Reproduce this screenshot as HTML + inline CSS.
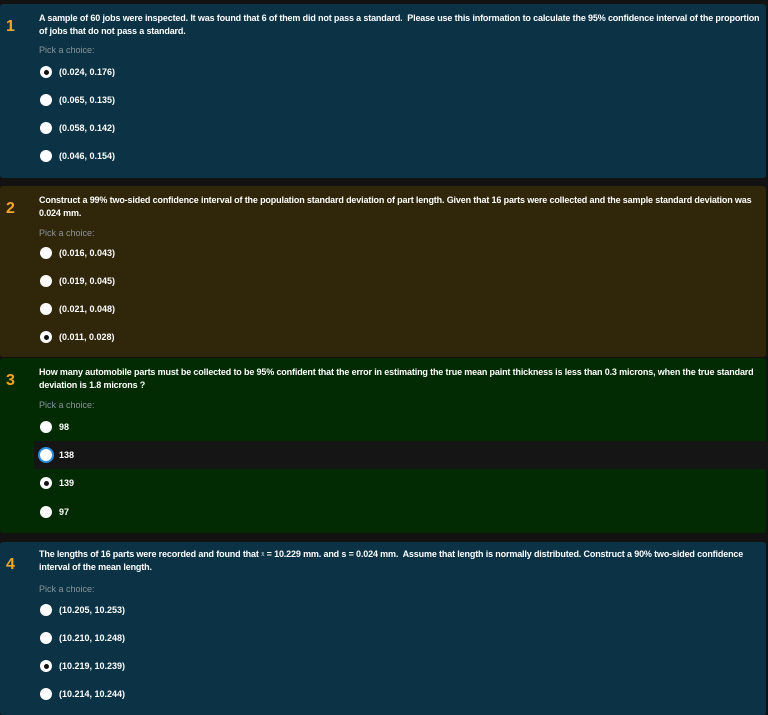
<!DOCTYPE html>
<html><head><style>
body{margin:0;width:768px;height:715px;background:#121212;position:relative;overflow:hidden;font-family:"Liberation Sans",Arial,sans-serif;}
.card{position:absolute;left:0;width:766px;border-radius:3px;}
.n{position:absolute;left:6px;color:#f5a623;font-weight:bold;font-size:16px;}
.q{position:absolute;left:39px;color:#fff;font-size:9px;font-weight:bold;white-space:nowrap;line-height:13px;letter-spacing:-0.15px;}
.q .x{display:inline-block;font-size:6px;color:#aaa;line-height:6px;vertical-align:middle;}
.p{position:absolute;left:39px;color:#8a949a;font-size:9px;}
.o{position:absolute;left:40px;height:12px;color:#fff;font-size:9px;font-weight:bold;white-space:nowrap;}
.o i{position:absolute;left:0;top:0;width:12px;height:12px;border-radius:50%;background:#fff;}
.o i.s::after{content:"";position:absolute;left:3.5px;top:3.5px;width:5px;height:5px;border-radius:50%;background:#111;}
.o i.f{box-shadow:0 0 0 2px #2a8ee0;}
.o span{position:absolute;left:19px;top:0;line-height:12px;}
</style></head><body>
<div class="card" style="top:4px;height:174px;background:#0b3245"></div>
<div class="card" style="top:186px;height:171px;background:#30260a"></div>
<div class="card" style="top:358px;height:175px;background:#032b03"></div>
<div style="position:absolute;left:34px;top:441px;width:734px;height:28px;background:#151515"></div>
<div class="card" style="top:542px;height:173px;background:#0b3245"></div>

<div class="n" style="top:18px">1</div>
<div class="q" style="top:12px">A sample of 60 jobs were inspected. It was found that 6 of them did not pass a standard.&nbsp; Please use this information to calculate the 95% confidence interval of the proportion<br>of jobs that do not pass a standard.</div>
<div class="p" style="top:45px">Pick a choice:</div>
<div class="o" style="top:66px"><i class="s"></i><span>(0.024, 0.176)</span></div>
<div class="o" style="top:94px"><i></i><span>(0.065, 0.135)</span></div>
<div class="o" style="top:122px"><i></i><span>(0.058, 0.142)</span></div>
<div class="o" style="top:150px"><i></i><span>(0.046, 0.154)</span></div>

<div class="n" style="top:200px">2</div>
<div class="q" style="top:194px">Construct a 99% two-sided confidence interval of the population standard deviation of part length. Given that 16 parts were collected and the sample standard deviation was<br>0.024 mm.</div>
<div class="p" style="top:228px">Pick a choice:</div>
<div class="o" style="top:247px"><i></i><span>(0.016, 0.043)</span></div>
<div class="o" style="top:275px"><i></i><span>(0.019, 0.045)</span></div>
<div class="o" style="top:303px"><i></i><span>(0.021, 0.048)</span></div>
<div class="o" style="top:331px"><i class="s"></i><span>(0.011, 0.028)</span></div>

<div class="n" style="top:372px">3</div>
<div class="q" style="top:366px">How many automobile parts must be collected to be 95% confident that the error in estimating the true mean paint thickness is less than 0.3 microns, when the true standard<br>deviation is 1.8 microns ?</div>
<div class="p" style="top:400px">Pick a choice:</div>
<div class="o" style="top:421px"><i></i><span>98</span></div>
<div class="o" style="top:449px"><i class="f"></i><span>138</span></div>
<div class="o" style="top:477px"><i class="s"></i><span>139</span></div>
<div class="o" style="top:506px"><i></i><span>97</span></div>

<div class="n" style="top:556px">4</div>
<div class="q" style="top:548px">The lengths of 16 parts were recorded and found that <span class="x">x̄</span> = 10.229 mm. and s = 0.024 mm.&nbsp; Assume that length is normally distributed. Construct a 90% two-sided confidence<br>interval of the mean length.</div>
<div class="p" style="top:584px">Pick a choice:</div>
<div class="o" style="top:604px"><i></i><span>(10.205, 10.253)</span></div>
<div class="o" style="top:632px"><i></i><span>(10.210, 10.248)</span></div>
<div class="o" style="top:660px"><i class="s"></i><span>(10.219, 10.239)</span></div>
<div class="o" style="top:688px"><i></i><span>(10.214, 10.244)</span></div>
</body></html>
